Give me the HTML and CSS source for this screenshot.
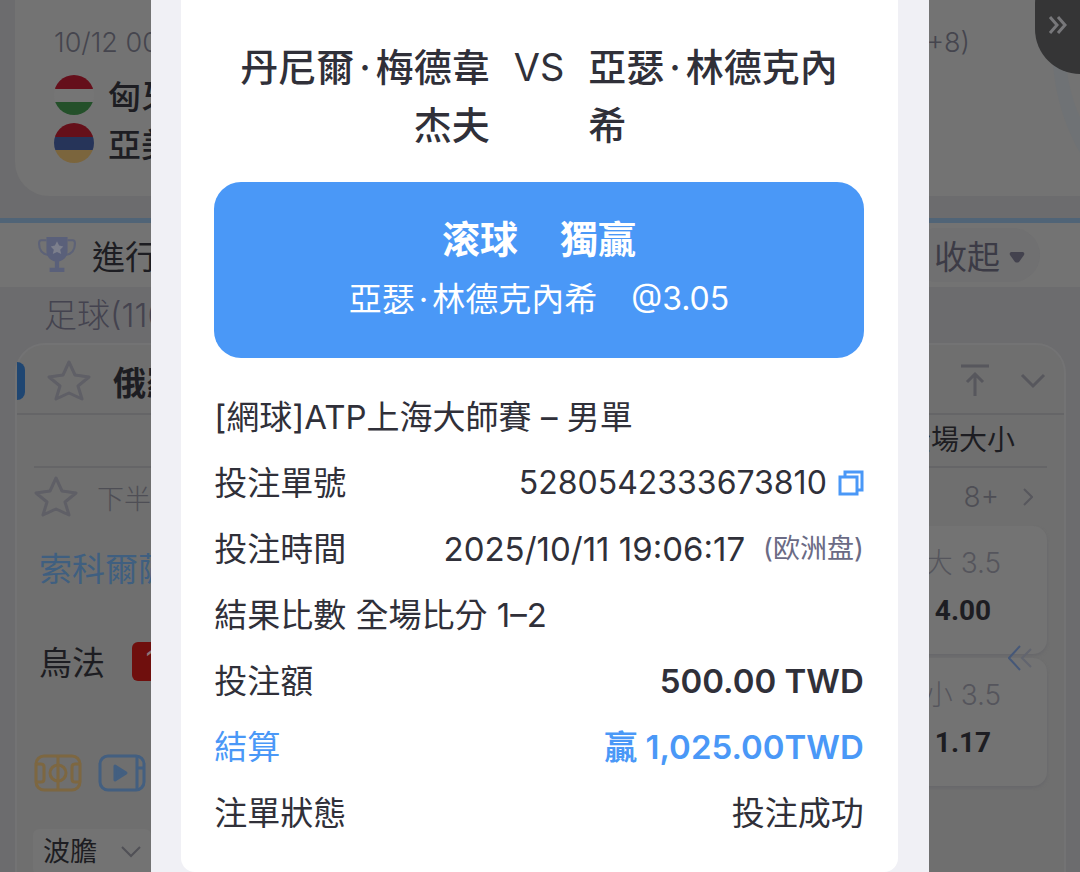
FILE: index.html
```html
<!DOCTYPE html>
<html lang="zh-Hant">
<head>
    <meta charset="UTF-8">
    <meta name="viewport" content="width=device-width, initial-scale=1.0">
    <title>注單詳情</title>
    <link rel="stylesheet" href="styles.css">
</head>
<body>
    <div class="page">
        <section class="featured">
            <svg class="arc" viewBox="0 0 30 110"><path d="M0 0C2 44 12 78 30 110V72C20 50 15 26 14 0Z" fill="#6f7275"/></svg>
            <div class="featured-time">
                <span>10/12 00:00</span>
                <span>(GMT+8)</span>
            </div>
            <div class="featured-team"><span class="flag hungary"></span>匈牙利</div>
            <div class="featured-team"><span class="flag armenia"></span>亞美尼亞</div>
        </section>

        <div class="live-bar">
            <svg class="trophy" viewBox="0 0 36 38">
                <path d="M8 5H3q-2 0-2 3c0 6 3 10 9 11M28 5h5q2 0 2 3c0 6-3 10-9 11" fill="none" stroke="#5d6277" stroke-width="2"/>
                <path d="M8 2h20v13c0 6-4 9-8 10v6h5v4H11v-4h5v-6c-4-1-8-4-8-10z" fill="#5a607a"/>
                <path d="M18 6l2 4 4 1-3 3 1 4-4-2-4 2 1-4-3-3 4-1z" fill="#7c7f8c"/>
            </svg>
            <span class="live-title">進行中</span>
            <button class="collapse">收起
                <svg viewBox="0 0 16 12"><path d="M2 1h12q2 1 1 3l-5 7q-2 1-4 0L1 4q-1-2 1-3z" fill="#43424e"/></svg>
            </button>
        </div>
        <div class="sport">足球(110)</div>

        <section class="league">
            <div class="league-head">
                <span class="tab"></span>
                <svg class="star" viewBox="0 0 44 44"><path d="M22 3l6 13 14 2-11 9 4 13-13-6-13 6 4-13L2 18l14-2z"/></svg>
                <span class="league-name">俄羅斯</span>
                <svg class="to-top" viewBox="0 0 30 34"><path d="M1 2h28M15 32V11M7 18l8-8 8 8"/></svg>
                <svg class="fold" viewBox="0 0 26 16"><path d="M2 2l11 11L24 2"/></svg>
            </div>
            <div class="market-head"><span>全場大小</span></div>
            <div class="match-info">
                <svg class="star" viewBox="0 0 44 44"><path d="M22 3l6 13 14 2-11 9 4 13-13-6-13 6 4-13L2 18l14-2z"/></svg>
                <span class="half">下半場</span>
                <span class="more">8+</span>
                <svg class="next" viewBox="0 0 10 18"><path d="M1 1l8 8-8 8"/></svg>
            </div>
            <div class="match">
                <div class="teams">
                    <div class="team leading">索科爾薩</div>
                    <div class="team">烏法 <span class="red-card">1</span></div>
                    <div class="media">
                        <svg viewBox="0 0 48 38" fill="none" stroke="#7d6741" stroke-width="3">
                            <rect x="2" y="2" width="44" height="34" rx="8"/>
                            <circle cx="24" cy="19" r="8"/>
                            <path d="M24 2v34M2 10h5q3 0 3 3v12q0 3-3 3H2M46 10h-5q-3 0-3 3v12q0 3 3 3h5"/>
                        </svg>
                        <svg viewBox="0 0 48 38" fill="none" stroke="#435f80" stroke-width="3">
                            <rect x="2" y="2" width="44" height="34" rx="8"/>
                            <path d="M39 2v34M39 14h7"/>
                            <path d="M17 12l11 7-11 7z" fill="#435f80" stroke-linejoin="round"/>
                        </svg>
                    </div>
                </div>
                <div class="odds">
                    <button class="odd"><span>大 3.5</span><b>4.00</b></button>
                    <button class="odd"><span>小 3.5</span><b>1.17</b></button>
                    <svg class="swipe" viewBox="0 0 24 26" fill="none" stroke-width="2">
                        <path d="M12 1L1 13l11 12" stroke="#465878"/>
                        <path d="M23 4l-9 9 9 9" stroke="#62656f"/>
                    </svg>
                </div>
            </div>
            <button class="filter">波膽
                <svg viewBox="0 0 20 12"><path d="M1 1l9 9 9-9"/></svg>
            </button>
        </section>
        <button class="drawer" aria-label="展開">
            <svg viewBox="0 0 20 18"><path d="M2 1l7 8-7 8M10 1l7 8-7 8"/></svg>
        </button>
    </div>

    <div class="modal" role="dialog">
        <div class="ticket">
            <h1 class="players">
                <span class="home">丹尼爾<i>·</i>梅德韋杰夫</span>
                <span class="vs">VS</span>
                <span class="away">亞瑟<i>·</i>林德克內希</span>
            </h1>
            <div class="pick">
                <div class="pick-type"><span>滚球</span><span>獨贏</span></div>
                <div class="pick-odds"><span>亞瑟<i>·</i>林德克內希</span><span class="num">@3.05</span></div>
            </div>
            <div class="row">[網球]ATP上海大師賽 – 男單</div>
            <div class="row">
                <span>投注單號</span>
                <span class="value num">5280542333673810
                    <button class="copy" aria-label="複製">
                        <svg viewBox="0 0 26 26" fill="none" stroke="#4a98f7" stroke-width="3"><path d="M7 6V2h17v18h-4"/><rect x="2" y="7" width="17" height="17"/></svg>
                    </button>
                </span>
            </div>
            <div class="row">
                <span>投注時間</span>
                <span class="value">2025/10/11 19:06:17 <small>(欧洲盘)</small></span>
            </div>
            <div class="row">結果比數 全場比分 1–2</div>
            <div class="row">
                <span>投注額</span>
                <span class="value strong">500.00 TWD</span>
            </div>
            <div class="row win">
                <span>結算</span>
                <span class="value strong">贏 1,025.00TWD</span>
            </div>
            <div class="row">
                <span>注單狀態</span>
                <span class="value">投注成功</span>
            </div>
        </div>
    </div>
</body>
</html>
```
FILE: styles.css
```css
* {
    box-sizing: border-box;
}
body {
    margin: 0;
    height: 100vh;
    overflow: hidden;
    background: #6c6c6e;
    color: #1d1d22;
    font-family: Inter, "Noto Sans CJK TC", sans-serif;
    font-size: 33px;
}
button {
    font: inherit;
    color: inherit;
    border: none;
    padding: 0;
    background: none;
    cursor: pointer;
}
svg {
    display: block;
    flex: none;
}
.page {
    position: relative;
    height: 100%;
    overflow: hidden;
}

/* featured match */
.featured {
    position: relative;
    height: 196px;
    margin-left: 15px;
    padding: 23px 110px 0 39px;
    background: #737373;
    border-bottom-left-radius: 34px;
}
.arc {
    position: absolute;
    right: 0;
    top: 50px;
    width: 28px;
}
.featured-time {
    display: flex;
    justify-content: space-between;
    margin-bottom: 8px;
    font-size: 27px;
    font-weight: 300;
    line-height: 40px;
    color: #45454e;
}
.featured-team {
    display: flex;
    align-items: center;
    gap: 14px;
    height: 48px;
    font-size: 33px;
    font-weight: 500;
}
.flag {
    width: 40px;
    height: 40px;
    border-radius: 50%;
}
.hungary {
    background: linear-gradient(#650f1b 34%, #757575 34% 67%, #24502a 67%);
}
.armenia {
    background: linear-gradient(#65101a 34%, #263459 34% 67%, #7b653d 67%);
}
.drawer {
    position: absolute;
    right: 0;
    top: -37px;
    width: 45px;
    height: 111px;
    padding: 13px 0 0 13px;
    border-radius: 50px 0 0 55px;
    background: #353536;
}
.drawer svg {
    width: 20px;
    fill: none;
    stroke: #77777a;
    stroke-width: 3;
}

/* live bar */
.live-bar {
    display: flex;
    align-items: center;
    height: 69px;
    margin-top: 22px;
    padding: 0 40px 0 38px;
    border-top: 5px solid #506477;
    background: #737373;
}
.trophy {
    width: 38px;
    margin-right: 16px;
}
.collapse {
    display: flex;
    align-items: center;
    gap: 9px;
    height: 54px;
    margin-left: auto;
    padding: 0 15px 0 24px;
    border-radius: 27px;
    background: #707071;
    color: #3c3b46;
}
.collapse svg {
    width: 16px;
    margin-top: 4px;
}
.sport {
    padding-left: 44px;
    line-height: 56px;
    font-weight: 300;
    color: #44434f;
}

/* league card */
.league {
    height: 600px;
    margin: 0 14px 0 15px;
    border: 2px solid #737374;
    border-radius: 30px 30px 0 0;
    background: #6f6f6f;
}
.league-head {
    display: flex;
    align-items: center;
    height: 70px;
    padding: 4px 18px 0 0;
    border-bottom: 2px solid #656567;
}
.tab {
    width: 8px;
    height: 38px;
    border-radius: 0 8px 8px 0;
    background: #1f4672;
}
.star {
    width: 44px;
    fill: none;
    stroke: #5f5f66;
    stroke-width: 3;
    stroke-linejoin: round;
}
.league-head .star {
    margin: 0 22px;
}
.league-name {
    font-weight: 700;
}
.to-top, .fold {
    fill: none;
    stroke: #57575d;
    stroke-width: 3;
}
.to-top {
    width: 30px;
    margin-left: auto;
}
.fold {
    width: 26px;
    margin-left: 30px;
}
.market-head {
    display: flex;
    justify-content: flex-end;
    margin: 0 17px;
    padding-right: 32px;
    border-bottom: 2px solid #656567;
    font-size: 28px;
    line-height: 51px;
}
.match-info {
    display: flex;
    align-items: center;
    height: 58px;
    padding: 0 31px 0 17px;
    font-size: 28px;
    font-weight: 300;
    color: #4e4e55;
}
.half {
    margin-left: 19px;
    font-size: 27px;
}
.more {
    margin-left: auto;
}
.next {
    width: 10px;
    margin-left: 24px;
    fill: none;
    stroke: #57575d;
    stroke-width: 2;
}
.match {
    display: flex;
    justify-content: space-between;
    padding: 0 17px;
}
.teams {
    margin-top: -6px;
    padding-left: 5px;
}
.team {
    display: flex;
    align-items: center;
    height: 94px;
    font-size: 33px;
}
.leading {
    color: #3f5f80;
}
.red-card {
    width: 39px;
    height: 39px;
    margin-left: 27px;
    border-radius: 6px;
    background: #6f0f0d;
    color: #8d7777;
    font-size: 28px;
    line-height: 38px;
    text-align: center;
}
.media {
    display: flex;
    gap: 16px;
    margin: 46px 0 0 -5px;
}
.media svg {
    width: 48px;
}
.odds {
    position: relative;
    display: flex;
    flex-direction: column;
    gap: 4px;
}
.odd {
    display: flex;
    flex-direction: column;
    align-items: center;
    justify-content: center;
    width: 168px;
    height: 128px;
    padding-bottom: 6px;
    border-radius: 14px;
    background: #737373;
    box-shadow: 0 2px 3px #68686b;
    line-height: 48px;
}
.odd span {
    font-size: 28px;
    font-weight: 300;
    color: #55555c;
}
.odd b {
    font-family: Roboto, sans-serif;
    font-size: 28px;
    font-weight: 700;
}
.swipe {
    position: absolute;
    right: 15px;
    top: 119px;
    width: 24px;
}
.filter {
    display: flex;
    align-items: center;
    gap: 24px;
    height: 46px;
    margin: 37px 0 0 16px;
    padding: 0 10px;
    border-radius: 6px;
    background: #737373;
    font-size: 27px;
    line-height: 40px;
}
.filter svg {
    width: 20px;
    fill: none;
    stroke: #505056;
    stroke-width: 2;
}

/* bet slip */
.modal {
    position: fixed;
    inset: 0 14%;
    padding: 0 31px 0 30px;
    background: #f0f0f5;
}
.ticket {
    height: 100%;
    padding: 38px 34px 0 33px;
    border-radius: 0 0 14px 14px;
    background: #fff;
    color: #303039;
}
.players {
    display: flex;
    justify-content: center;
    gap: 24px;
    margin: 0 0 28px;
    font-size: 38px;
    font-weight: 500;
    line-height: 58px;
}
.players i {
    margin: 0 5px;
}
i {
    margin: 0 4px;
    font-style: normal;
}
.home, .away {
    flex: 1;
}
.home {
    padding-left: 20px;
    text-align: right;
}
.away {
    padding-right: 20px;
}
.vs {
    font-weight: 400;
}
.pick {
    margin-bottom: 26px;
    padding: 27px 0 29px;
    border-radius: 27px;
    background: #4a98f7;
    color: #fff;
    line-height: 60px;
}
.pick-type, .pick-odds {
    display: flex;
    justify-content: center;
}
.pick-type {
    gap: 42px;
    font-size: 38px;
    font-weight: 700;
}
.pick-odds {
    gap: 34px;
}
.row {
    display: flex;
    justify-content: space-between;
    line-height: 66px;
}
.value {
    display: flex;
    align-items: center;
}
.num {
    font-size: 32px;
}
.copy {
    margin-left: 11px;
}
.copy svg {
    width: 26px;
}
small {
    margin-left: 18px;
    font-size: 27px;
    color: #6b6b85;
}
.strong {
    font-weight: 600;
}
.win {
    color: #4a98f7;
}
```
